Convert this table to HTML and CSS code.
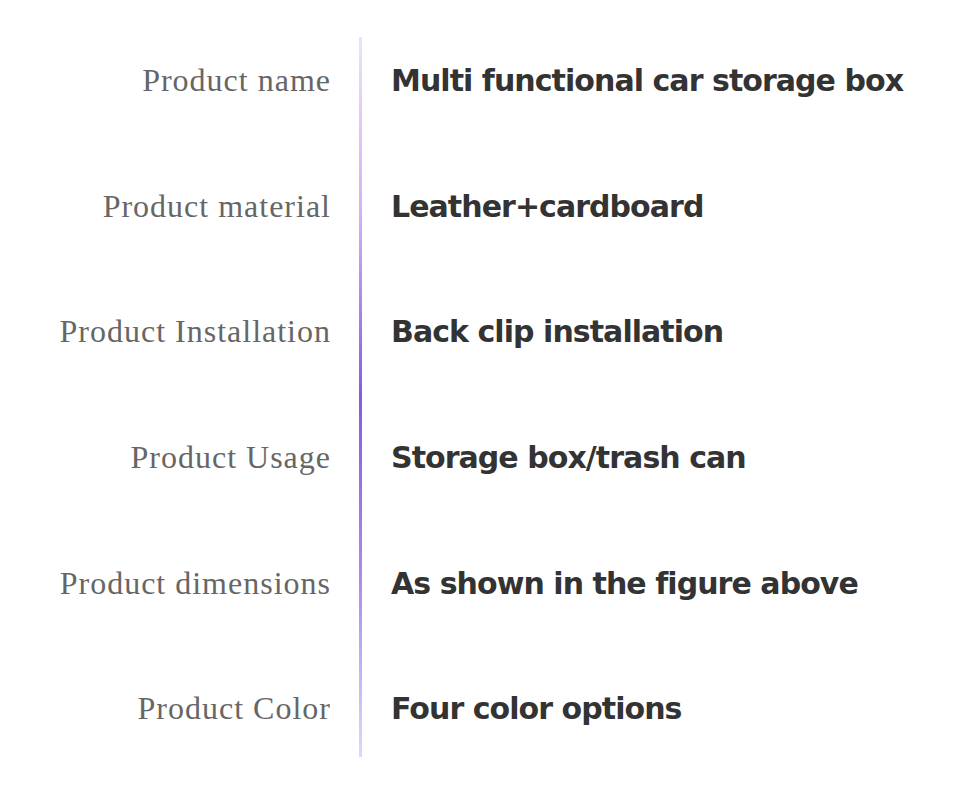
FILE: index.html
```html
<!DOCTYPE html>
<html>
<head>
<meta charset="utf-8">
<link rel="stylesheet" href="styles.css">
</head>
<body>
<div class="specs">
  <div class="divider"></div>
  <div class="label r1">Product name</div><div class="value r1">Multi functional car storage box</div>
  <div class="label r2">Product material</div><div class="value r2">Leather+cardboard</div>
  <div class="label r3">Product Installation</div><div class="value r3">Back clip installation</div>
  <div class="label r4">Product Usage</div><div class="value r4">Storage box/trash can</div>
  <div class="label r5">Product dimensions</div><div class="value r5">As shown in the figure above</div>
  <div class="label r6">Product Color</div><div class="value r6">Four color options</div>
</div>
</body>
</html>
```
FILE: styles.css
```css
html, body { margin: 0; padding: 0; background: #fff; }
.specs {
  display: grid;
  grid-template-columns: 330px 3px 1fr;
  grid-template-rows: repeat(6, 125.6px);
  column-gap: 29px;
  padding-top: 18px;
  width: 960px;
  height: 802px;
  box-sizing: border-box;
}
.divider {
  grid-column: 2;
  grid-row: 1 / span 6;
  margin: 19px 0 15px;
  background: linear-gradient(to bottom, #ece0fa 0%, #cdb2f3 25%, #8a56e8 50%, #a98bef 75%, #dcd8fa 100%);
}
.label {
  grid-column: 1;
  display: flex;
  align-items: center;
  justify-content: flex-end;
  font-family: "Liberation Serif", serif;
  font-size: 32px;
  letter-spacing: 1px;
  margin-right: -1px;
  color: #666;
}
.value {
  grid-column: 3;
  display: flex;
  align-items: center;
  font-family: "DejaVu Sans", sans-serif;
  font-weight: bold;
  font-size: 30px;
  letter-spacing: -0.95px;
  color: #333;
}
.r1 { grid-row: 1; } .r2 { grid-row: 2; } .r3 { grid-row: 3; }
.r4 { grid-row: 4; } .r5 { grid-row: 5; } .r6 { grid-row: 6; }
```
